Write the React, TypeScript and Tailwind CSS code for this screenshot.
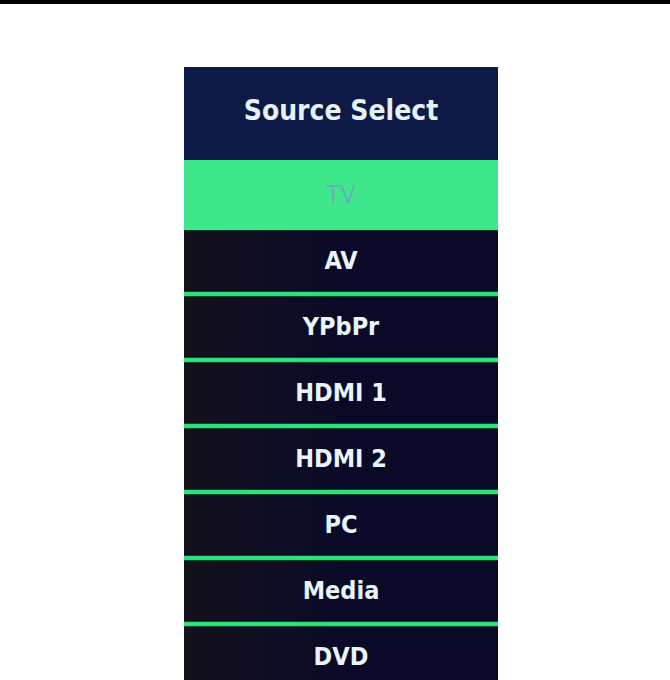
const sources = ["AV", "YPbPr", "HDMI 1", "HDMI 2", "PC", "Media", "DVD"];

export default function App() {
  return (
    <div className="h-[680px] bg-white overflow-hidden" style={{ fontFamily: '"DejaVu Sans Condensed", "DejaVu Sans", sans-serif' }}>
      <div className="h-[4px] bg-black" />
      <div className="ml-[184px] mt-[63px] w-[314px] h-[613px] bg-[#0a0b2a] flex flex-col overflow-hidden">
        <div className="shrink-0 h-[93px] bg-[#0d1a45] flex items-center justify-center pb-[6px]">
          <span className="text-[28px] font-bold text-[#e4f1f6]">Source Select</span>
        </div>

        {/* selected row */}
        <div className="shrink-0 h-[71px] bg-[#3fe78c] border-b border-[#0b3a24] flex items-center justify-center">
          <span className="text-[25px] text-[#62b2b8]">TV</span>
        </div>

        <div className="shrink-0 bg-gradient-to-r from-[#14101c] via-[#0a0a28] to-[#0a0a28]">
          {sources.map((name, i) => (
            <div key={name}>
              <div className="h-[60px] flex items-center justify-center">
                <span className="text-[25px] font-bold text-[#e8f5fa]">{name}</span>
              </div>
              {i < sources.length - 1 && (
                <div className="h-[6px] bg-[#0c4a2a] flex items-center">
                  <div className="h-[4px] w-full bg-[#2ee07c]" />
                </div>
              )}
            </div>
          ))}
        </div>
      </div>
    </div>
  );
}
